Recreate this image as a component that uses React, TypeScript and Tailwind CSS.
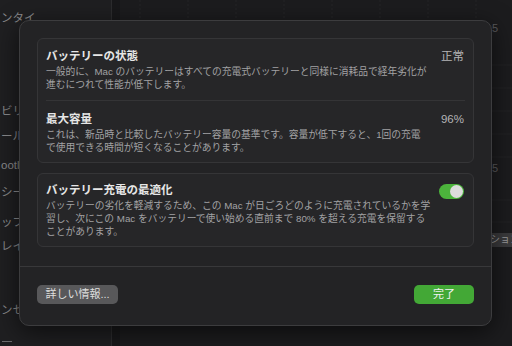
import React from 'react';

const font = { fontFamily: '"Liberation Sans", "Noto Sans CJK JP", sans-serif' };

const sideItems = [
  { label: 'ンタイ', cls: 'mt-[11px]' },
  { label: 'ビリ', cls: 'mt-[79px]' },
  { label: 'ール', cls: 'mt-[11px]' },
  { label: 'ootl', cls: 'mt-[15px]' },
  { label: 'シー', cls: 'mt-[13px]' },
  { label: 'ップ', cls: 'mt-[16px]' },
  { label: 'レイ', cls: 'mt-[10px]' },
  { label: 'ンセ', cls: 'mt-[50px]' },
];

const Background: React.FC = () => (
  <div className="flex h-full w-full">
    <div className="flex w-[112px] flex-col border-r border-[#2c2c2e] bg-[#1f1f21] text-[11.5px] leading-[14px] text-[#8a8a8c]">
      {sideItems.map(item => (
        <div key={item.label} className={`${item.cls} pl-[1px] whitespace-nowrap`}>{item.label}</div>
      ))}
      <div className="mt-auto mb-[4px] h-[1px] w-[10px] bg-[#6a6a6c] ml-[2px]"></div>
    </div>
    <div className="w-[8px] bg-[#18181a]"></div>
    <div className="relative flex-1 bg-[#1c1c1e]">
      <svg width="392" height="346" className="absolute inset-0">
        {[20, 68, 116, 164, 212, 260, 308, 356].map(x => (
          <line key={x} x1={x} y1={0} x2={x} y2={60} stroke="#242426" strokeWidth="1" strokeDasharray="2 2" />
        ))}
        {[65, 88, 111, 134, 157, 200, 222].map(y => (
          <line key={y} x1={300} y1={y} x2={392} y2={y} stroke="#232325" strokeWidth="1" />
        ))}
      </svg>
      <span className="absolute left-[372px] top-[20px] text-[11px] text-[#5c5c5e]">5</span>
      <span className="absolute left-[372px] top-[160px] text-[11px] text-[#5c5c5e]">5</span>
      <span className="absolute left-[368px] top-[233px] whitespace-nowrap bg-[#3a3a3c] pl-[2px] pr-[4px] text-[10px] leading-[14px] text-[#9a9a9c]">ション</span>
    </div>
  </div>
);

const Row: React.FC<{ title: string; value?: string; lines: string[]; className: string; toggle?: boolean }> = ({ title, value, lines, className, toggle }) => (
  <div className={className}>
    <div className="flex items-center justify-between">
      <span className="text-[11.5px] font-bold leading-[17px] text-[#e6e6e6]">{title}</span>
      {value && <span className="text-[11.5px] leading-[17px] text-[#b4b4b6]">{value}</span>}
      {toggle && (
        <div className="mt-[2px] flex h-[15px] w-[25px] items-center justify-end rounded-full bg-[#4cb43c] pr-[1px]">
          <div className="h-[13px] w-[13px] rounded-full bg-[#dcdcdc]"></div>
        </div>
      )}
    </div>
    {lines.map(line => (
      <div key={line} className="whitespace-nowrap text-[9.75px] leading-[13px] text-[#a2a2a4]">{line}</div>
    ))}
  </div>
);

export default function App() {
  return (
    <div className="relative h-[346px] w-[512px] overflow-hidden bg-[#1c1c1e]" style={font}>
      <Background />
      <div className="absolute left-[19px] top-[20px] flex h-[306px] w-[473px] flex-col rounded-[10px] border border-[#3c3c3e] bg-[#232325] shadow-[0_6px_24px_rgba(0,0,0,0.6)]">
        <div className="flex flex-col gap-[10px] px-[17px] pt-[17px]">
          <div className="rounded-[6px] border border-[#353537] bg-[#262628] px-[8px]">
            <Row
              className="pt-[9px] pb-[9px] pr-[1px]"
              title="バッテリーの状態"
              value="正常"
              lines={[
                '一般的に、Mac のバッテリーはすべての充電式バッテリーと同様に消耗品で経年劣化が',
                '進むにつれて性能が低下します。',
              ]}
            />
            <div className="h-[1px] bg-[#343436]"></div>
            <Row
              className="pt-[10px] pb-[8px] pr-[1px]"
              title="最大容量"
              value="96%"
              lines={[
                'これは、新品時と比較したバッテリー容量の基準です。容量が低下すると、1回の充電',
                'で使用できる時間が短くなることがあります。',
              ]}
            />
          </div>
          <div className="rounded-[6px] border border-[#353537] bg-[#262628] px-[8px]">
            <Row
              className="pt-[8px] pb-[8px] pr-[1px]"
              title="バッテリー充電の最適化"
              toggle
              lines={[
                'バッテリーの劣化を軽減するため、この Mac が日ごろどのように充電されているかを学',
                '習し、次にこの Mac をバッテリーで使い始める直前まで 80% を超える充電を保留する',
                'ことがあります。',
              ]}
            />
          </div>
        </div>
        <div className="mt-[19px] h-[1px] bg-[#38383a]"></div>
        <div className="flex items-center justify-between px-[17px] pt-[18px]">
          <button className="h-[19px] w-[81px] rounded-[5px] bg-[#58585a] text-[11px] leading-[19px] text-[#dedede]">詳しい情報...</button>
          <button className="h-[19px] w-[60px] rounded-[5px] bg-[#43a836] text-[11px] leading-[19px] text-[#f2f2f2]">完了</button>
        </div>
      </div>
    </div>
  );
}
